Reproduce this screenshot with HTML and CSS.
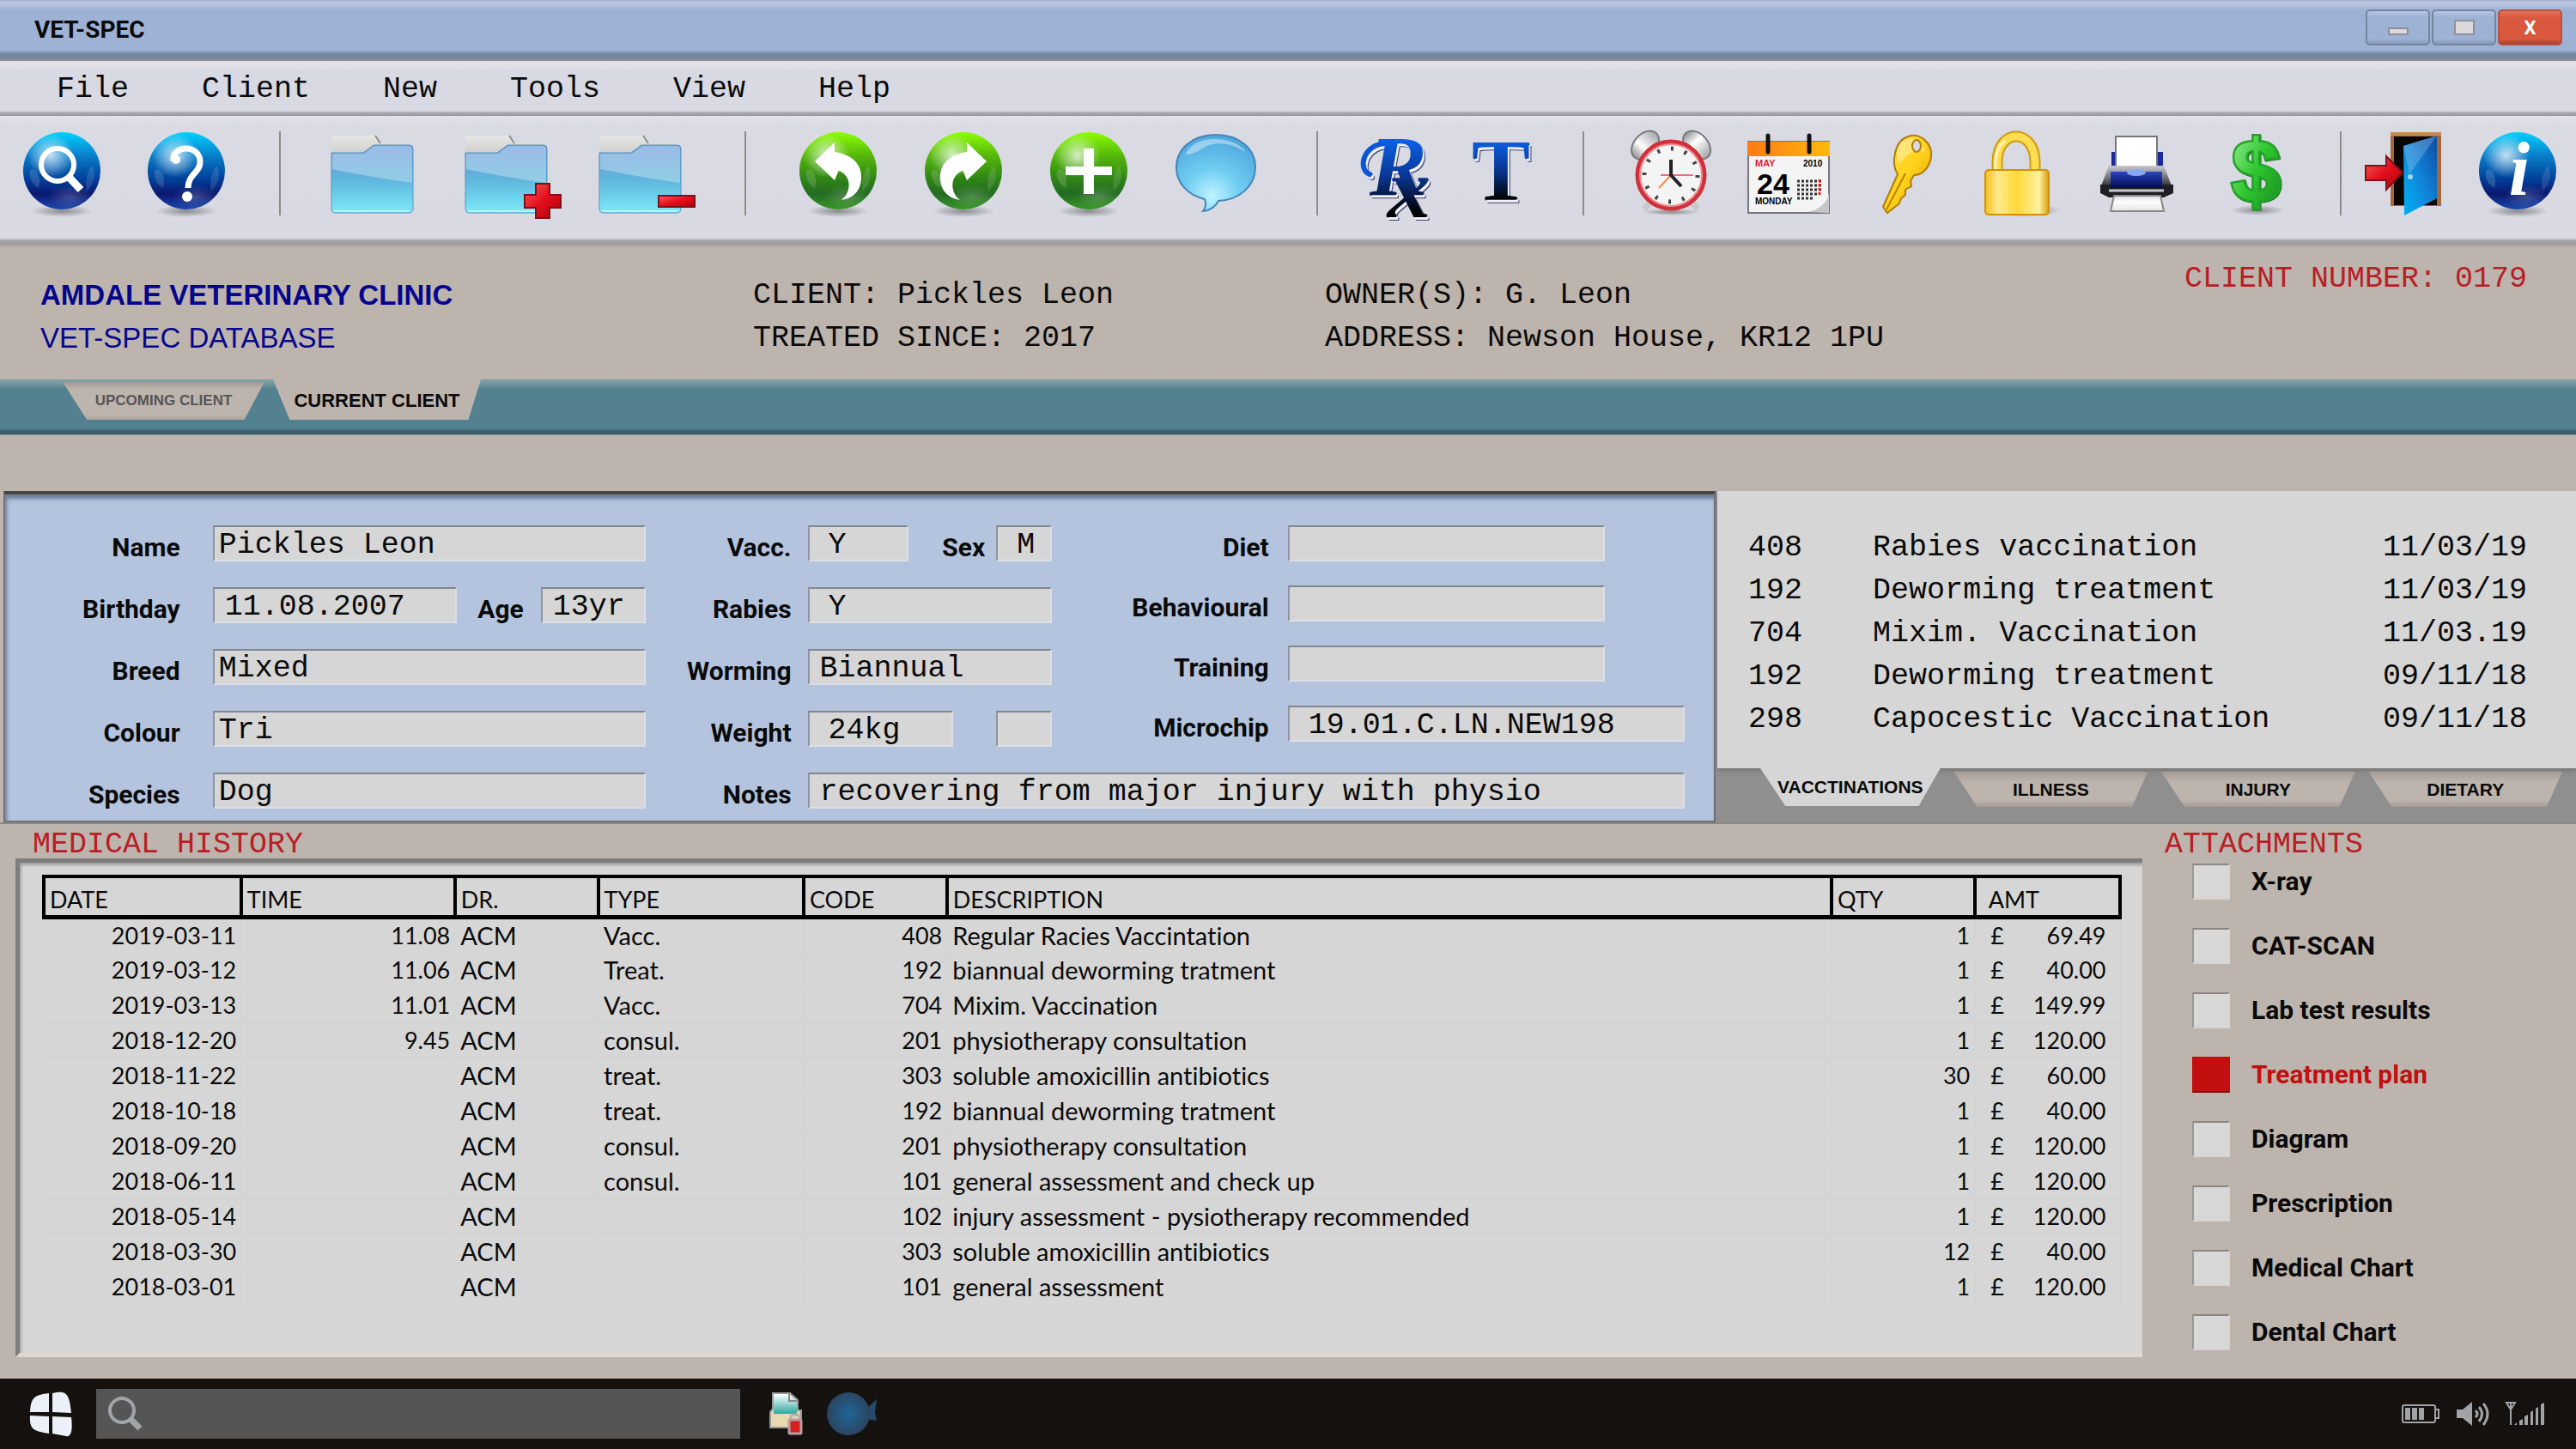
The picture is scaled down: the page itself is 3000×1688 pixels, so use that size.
FILE: index.html
```html
<!DOCTYPE html>
<html lang="en">
<head>
    <meta charset="UTF-8">
    <meta name="viewport" content="width=device-width, initial-scale=1.0">
    <title>VET-SPEC</title>
    <link rel="stylesheet" href="styles.css">
</head>
<body>
    <!-- Shared gradients and shapes for the icons -->
    <svg class="icon-defs" aria-hidden="true">
        <defs>
            <linearGradient id="blueOrb" x1="0" y1="0" x2="0" y2="1">
                <stop offset="0" stop-color="#00d2ff"/>
                <stop offset="0.3" stop-color="#0a7fca"/>
                <stop offset="0.6" stop-color="#00419b"/>
                <stop offset="0.8" stop-color="#0b1770"/>
                <stop offset="1" stop-color="#1c4bb0"/>
            </linearGradient>
            <linearGradient id="greenOrb" x1="0" y1="0" x2="0" y2="1">
                <stop offset="0" stop-color="#8cff00"/>
                <stop offset="0.3" stop-color="#56b80c"/>
                <stop offset="0.6" stop-color="#2f8516"/>
                <stop offset="0.8" stop-color="#246b22"/>
                <stop offset="1" stop-color="#3a9a2a"/>
            </linearGradient>
            <radialGradient id="shine">
                <stop offset="0" stop-color="#fff" stop-opacity="0.75"/>
                <stop offset="1" stop-color="#fff" stop-opacity="0"/>
            </radialGradient>
            <radialGradient id="shade">
                <stop offset="0" stop-color="#555" stop-opacity="0.6"/>
                <stop offset="1" stop-color="#555" stop-opacity="0"/>
            </radialGradient>
            <linearGradient id="folderFront" x1="0" y1="0" x2="0" y2="1">
                <stop offset="0" stop-color="#6a9bd8"/>
                <stop offset="0.5" stop-color="#5fb4dc"/>
                <stop offset="1" stop-color="#7deaf8"/>
            </linearGradient>
            <linearGradient id="folderBack" x1="0" y1="0" x2="0" y2="1">
                <stop offset="0" stop-color="#e6e6e4"/>
                <stop offset="1" stop-color="#bfbfbd"/>
            </linearGradient>
            <linearGradient id="redGloss" x1="0" y1="0" x2="1" y2="1">
                <stop offset="0" stop-color="#ff5a5a"/>
                <stop offset="0.5" stop-color="#e0101c"/>
                <stop offset="1" stop-color="#b30009"/>
            </linearGradient>
            <radialGradient id="bubbleFill" cx="0.45" cy="0.8" r="0.8">
                <stop offset="0" stop-color="#bff4ff"/>
                <stop offset="0.45" stop-color="#6fcdf2"/>
                <stop offset="1" stop-color="#4ea6dc"/>
            </radialGradient>
            <linearGradient id="inkBlue" x1="0" y1="0" x2="0" y2="1">
                <stop offset="0.1" stop-color="#0a6cff"/>
                <stop offset="0.5" stop-color="#0a3590"/>
                <stop offset="0.8" stop-color="#000"/>
            </linearGradient>
            <linearGradient id="gold" x1="0" y1="0" x2="1" y2="1">
                <stop offset="0" stop-color="#ffe14a"/>
                <stop offset="0.5" stop-color="#ffd21c"/>
                <stop offset="1" stop-color="#d99a00"/>
            </linearGradient>
            <linearGradient id="lockBody" x1="0" y1="0" x2="1" y2="0">
                <stop offset="0" stop-color="#f4be1c"/>
                <stop offset="0.2" stop-color="#ffe98c"/>
                <stop offset="0.5" stop-color="#ffd93a"/>
                <stop offset="0.85" stop-color="#fff0a0"/>
                <stop offset="1" stop-color="#dc9c08"/>
            </linearGradient>
            <linearGradient id="orange" x1="0" y1="0" x2="1" y2="0">
                <stop offset="0" stop-color="#ff7a14"/>
                <stop offset="1" stop-color="#ffb90a"/>
            </linearGradient>
            <linearGradient id="bell" x1="0" y1="0" x2="1" y2="0">
                <stop offset="0" stop-color="#8f9093"/>
                <stop offset="0.4" stop-color="#fff"/>
                <stop offset="1" stop-color="#a4a5a9"/>
            </linearGradient>
            <linearGradient id="paper" x1="0" y1="0" x2="0" y2="1">
                <stop offset="0" stop-color="#dcdcdc"/>
                <stop offset="0.4" stop-color="#fff"/>
                <stop offset="1" stop-color="#e4e4e4"/>
            </linearGradient>
            <linearGradient id="printerSide" x1="0" y1="0" x2="0" y2="1">
                <stop offset="0" stop-color="#c9c9cf"/>
                <stop offset="0.6" stop-color="#67676f"/>
                <stop offset="1" stop-color="#1c1c20"/>
            </linearGradient>
            <linearGradient id="printerFront" x1="0" y1="0" x2="0" y2="1">
                <stop offset="0" stop-color="#2b45c0"/>
                <stop offset="1" stop-color="#020a50"/>
            </linearGradient>
            <linearGradient id="money" x1="0" y1="0" x2="1" y2="1">
                <stop offset="0" stop-color="#a4f0a0"/>
                <stop offset="0.5" stop-color="#2fc62f"/>
                <stop offset="1" stop-color="#158a1c"/>
            </linearGradient>
            <linearGradient id="doorBlue" x1="0" y1="1" x2="1" y2="0">
                <stop offset="0" stop-color="#00b4f4"/>
                <stop offset="0.5" stop-color="#1183d8"/>
                <stop offset="1" stop-color="#0d4aa0"/>
            </linearGradient>
            <linearGradient id="sheetTeal" x1="0" y1="0" x2="0" y2="1">
                <stop offset="0" stop-color="#fff"/>
                <stop offset="1" stop-color="#2fa8a0"/>
            </linearGradient>
            <radialGradient id="fishBlue">
                <stop offset="0" stop-color="#1f6699"/>
                <stop offset="1" stop-color="#2a4560"/>
            </radialGradient>
            <g id="orbShine">
                <ellipse cx="45" cy="93" rx="36" ry="7" fill="url(#shade)"/>
            </g>
            <g id="orbLight">
                <ellipse cx="32" cy="28" rx="27" ry="26" fill="url(#shine)"/>
                <path d="M8 46 C14 40 22 52 18 66 C10 62 7 54 8 46 Z" fill="#fff" opacity="0.15"/>
                <path d="M80 40 C86 50 82 62 74 70 C72 58 74 48 80 40 Z" fill="#fff" opacity="0.12"/>
                <ellipse cx="55" cy="76" rx="26" ry="14" fill="url(#shine)" opacity="0.25"/>
            </g>
            <g id="folder">
                <path d="M1 5 H52 L58 13 H92 V40 H1 Z" fill="url(#folderBack)"/>
                <path d="M52 5 L58 14" stroke="#8d8d8d" stroke-width="2" fill="none"/>
                <path d="M1 25 H38 L50 16 H92 Q96 16 96 20 V90 Q96 95 91 95 H6 Q1 95 1 90 Z" fill="url(#folderFront)" stroke="#5c93bd" stroke-width="1"/>
                <path d="M2 26 H39 L51 17 H91 Q95 17 95 21 V60 Q50 54 2 44 Z" fill="#fff" opacity="0.32"/>
                <path d="M4 93 H92" stroke="#b5f6ff" stroke-width="2"/>
            </g>
        </defs>
    </svg>

    <header class="title-bar">
        <h1>VET-SPEC</h1>
        <div class="window-buttons">
            <button type="button" aria-label="Minimize">
                <svg viewBox="0 0 24 24"><rect x="1" y="13" width="22" height="7" fill="#ddd8dc" stroke="#8d8f9b" stroke-width="2"/></svg>
            </button>
            <button type="button" aria-label="Maximize">
                <svg viewBox="0 0 24 24"><rect x="1" y="4" width="22" height="16" fill="#ddd8dc" stroke="#8d8f9b" stroke-width="2"/></svg>
            </button>
            <button type="button" class="close">X</button>
        </div>
    </header>

    <nav class="menu-bar">
        <button type="button">File</button>
        <button type="button">Client</button>
        <button type="button">New</button>
        <button type="button">Tools</button>
        <button type="button">View</button>
        <button type="button">Help</button>
    </nav>

    <div class="toolbar">
        <div class="tool-group find-tools">
            <button type="button" aria-label="Search">
                <svg viewBox="0 0 90 98">
                    <use href="#orbShine"/>
                    <circle cx="45" cy="46" r="45" fill="url(#blueOrb)"/>
                    <use href="#orbLight"/>
                    <circle cx="40" cy="39" r="19" fill="none" stroke="#fff" stroke-width="6"/>
                    <path d="M53 53 L67 68" stroke="#fff" stroke-width="9"/>
                </svg>
            </button>
            <button type="button" aria-label="Help">
                <svg viewBox="0 0 90 98">
                    <use href="#orbShine"/>
                    <circle cx="45" cy="46" r="45" fill="url(#blueOrb)"/>
                    <use href="#orbLight"/>
                    <path d="M30 34 C28 16 61 14 61 36 C61 48 47 50 47 66" fill="none" stroke="#fff" stroke-width="7"/>
                    <circle cx="33" cy="33" r="5" fill="#fff"/>
                    <circle cx="46" cy="76" r="6" fill="#fff"/>
                </svg>
            </button>
        </div>
        <div class="tool-group folder-tools">
            <button type="button" aria-label="Open folder">
                <svg viewBox="0 0 113 98"><use href="#folder"/></svg>
            </button>
            <button type="button" aria-label="Add folder">
                <svg viewBox="0 0 113 98">
                    <use href="#folder"/>
                    <path d="M83 61 H99 V74 H112 V89 H99 V101 H83 V89 H70 V74 H83 Z" fill="url(#redGloss)" stroke="#7d1014" stroke-width="2"/>
                </svg>
            </button>
            <button type="button" aria-label="Remove folder">
                <svg viewBox="0 0 113 98">
                    <use href="#folder"/>
                    <rect x="70" y="75" width="42" height="13" fill="url(#redGloss)" stroke="#7d1014" stroke-width="2"/>
                </svg>
            </button>
        </div>
        <div class="tool-group edit-tools">
            <button type="button" aria-label="Undo">
                <svg viewBox="0 0 90 98">
                    <use href="#orbShine"/>
                    <circle cx="45" cy="46" r="45" fill="url(#greenOrb)"/>
                    <use href="#orbLight"/>
                    <path d="M18 35 L41 13 V24 C66 28 73 42 72 56 C71 70 62 78 49 80 C60 72 62 52 46 46 V45 L41 57 Z" fill="#fff"/>
                </svg>
            </button>
            <button type="button" aria-label="Redo">
                <svg viewBox="0 0 90 98">
                    <use href="#orbShine"/>
                    <circle cx="45" cy="46" r="45" fill="url(#greenOrb)"/>
                    <use href="#orbLight"/>
                    <path d="M72 35 L49 13 V24 C24 28 17 42 18 56 C19 70 28 78 41 80 C30 72 28 52 44 46 V45 L49 57 Z" fill="#fff"/>
                </svg>
            </button>
            <button type="button" aria-label="Add">
                <svg viewBox="0 0 90 98">
                    <use href="#orbShine"/>
                    <circle cx="45" cy="46" r="45" fill="url(#greenOrb)"/>
                    <use href="#orbLight"/>
                    <path d="M39 20 H51 V41 H72 V51 H51 V73 H39 V51 H18 V41 H39 Z" fill="#fff"/>
                </svg>
            </button>
            <button type="button" aria-label="Comment">
                <svg viewBox="0 0 94 98">
                    <path d="M47 4 C74 4 93 20 93 42 C93 64 74 80 50 81 C47 87 41 92 32 93 C35 89 36 84 34 79 C14 74 1 60 1 42 C1 20 20 4 47 4 Z" fill="url(#bubbleFill)" stroke="#4586b8" stroke-width="2"/>
                    <path d="M11 27 C18 14 30 9 45 9 C62 9 76 15 82 25 C64 11 42 12 31 20 C25 24 19 27 11 27 Z" fill="#fff" opacity="0.4"/>
                </svg>
            </button>
        </div>
        <div class="tool-group text-tools">
            <button type="button" aria-label="Prescription">
                <svg viewBox="0 0 81 98" class="script-type">
                    <path d="M28 14 C2 16 -4 44 10 50" fill="none" stroke="#0b56d8" stroke-width="6" stroke-linecap="round"/>
                    <text x="10" y="74">R<tspan dx="-46" dy="26">x</tspan></text>
                </svg>
            </button>
            <button type="button" aria-label="Text">
                <svg viewBox="0 0 64 98" class="block-type">
                    <text x="-3" y="80">T</text>
                </svg>
            </button>
        </div>
        <div class="tool-group desk-tools">
            <button type="button" aria-label="Reminders">
                <svg viewBox="0 0 96 98">
                    <ellipse cx="48" cy="94" rx="34" ry="4" fill="url(#shade)"/>
                    <path d="M24 82 L17 91 M72 82 L79 91" stroke="#c9c9cc" stroke-width="7"/>
                    <ellipse cx="18" cy="16" rx="19" ry="13" transform="rotate(-48 18 16)" fill="url(#bell)" stroke="#77787c" stroke-width="2"/>
                    <ellipse cx="78" cy="16" rx="19" ry="13" transform="rotate(48 78 16)" fill="url(#bell)" stroke="#77787c" stroke-width="2"/>
                    <circle cx="48" cy="51" r="39" fill="#f4f4f5" stroke="#d0303a" stroke-width="5"/>
                    <circle cx="48" cy="51" r="36" fill="none" stroke="#f08a90" stroke-width="2"/>
                    <circle cx="48" cy="51" r="31" fill="none" stroke="#444" stroke-width="5" stroke-dasharray="3 13.2"/>
                    <path d="M48 51 L34 66" stroke="#ef8a4c" stroke-width="2"/>
                    <path d="M36 51 H74" stroke="#e0727a" stroke-width="2"/>
                    <path d="M48 33 V51 L60 64" fill="none" stroke="#222" stroke-width="4"/>
                </svg>
            </button>
            <button type="button" aria-label="Calendar">
                <svg viewBox="0 0 96 98" class="calendar-type">
                    <path d="M1 12 H95 V95 H1 Z" fill="#f4f4f4" stroke="#777" stroke-width="2"/>
                    <rect x="0" y="12" width="96" height="17" fill="url(#orange)"/>
                    <path d="M70 94 C82 92 93 84 95 72 V95 Z" fill="#c7c7c7"/>
                    <path d="M24 5 V24 M72 5 V24" stroke="#111" stroke-width="5" stroke-linecap="round"/>
                    <text x="9" y="41" class="month">MAY</text>
                    <text x="65" y="41" class="year">2010</text>
                    <text x="11" y="73" class="day">24</text>
                    <text x="9" y="85" class="weekday">MONDAY</text>
                    <path d="M58 58 H86 M58 63 H86 M58 68 H86 M58 73 H82 M58 78 H76" stroke="#333" stroke-width="3" stroke-dasharray="3 2"/>
                    <path d="M84 56 V74" stroke="#e02424" stroke-width="3" stroke-dasharray="3 2"/>
                </svg>
            </button>
            <button type="button" aria-label="Password">
                <svg viewBox="0 0 96 98">
                    <path d="M50 6 C64 1 79 14 77 30 C75 42 67 51 57 51 L53 58 L54 64 L47 68 L47 74 L42 78 L40 84 L26 95 L21 88 L38 50 C30 38 34 11 50 6 Z" fill="url(#gold)" stroke="#b07c08" stroke-width="2"/>
                    <path d="M47 49 L25 91" stroke="#b98306" stroke-width="2"/>
                    <path d="M42 12 C52 4 68 10 70 24 C60 20 48 26 40 38 C36 30 36 20 42 12 Z" fill="#fff" opacity="0.35"/>
                    <ellipse cx="60" cy="17" rx="5" ry="7" fill="#d8d9e2" stroke="#b07c08" stroke-width="2"/>
                </svg>
            </button>
            <button type="button" aria-label="Lock record">
                <svg viewBox="0 0 96 98">
                    <ellipse cx="50" cy="92" rx="42" ry="8" fill="url(#shade)"/>
                    <path d="M17 48 V36 C17 -4 61 -4 61 36 V48" fill="none" stroke="#d09a10" stroke-width="13"/>
                    <path d="M17 48 V36 C17 -4 61 -4 61 36 V48" fill="none" stroke="#ffdd50" stroke-width="9"/>
                    <path d="M15 48 V36 C16 20 21 14 27 11" fill="none" stroke="#fff5c0" stroke-width="3"/>
                    <rect x="3" y="45" width="74" height="52" rx="4" fill="url(#lockBody)" stroke="#cf9405" stroke-width="2"/>
                </svg>
            </button>
            <button type="button" aria-label="Print">
                <svg viewBox="0 0 96 98">
                    <rect x="13" y="24" width="60" height="22" fill="#1a2a9c"/>
                    <rect x="18" y="6" width="48" height="36" fill="#fff" stroke="#777" stroke-width="2"/>
                    <path d="M10 40 H74 L84 66 H0 Z" fill="url(#printerSide)"/>
                    <path d="M0 62 H85 V72 L74 77 H10 L0 72 Z" fill="#1e1e24"/>
                    <path d="M12 47 H72 V66 H12 Z" fill="url(#printerFront)"/>
                    <path d="M10 69 H74" stroke="#c9c9cf" stroke-width="3"/>
                    <ellipse cx="42" cy="48" rx="11" ry="4" fill="#89a8f4"/>
                    <path d="M16 75 H70 L74 93 H12 Z" fill="url(#paper)" stroke="#888" stroke-width="2"/>
                </svg>
            </button>
            <button type="button" aria-label="Billing">
                <svg viewBox="0 0 96 98" class="money-type">
                    <ellipse cx="46" cy="92" rx="32" ry="6" fill="url(#shade)"/>
                    <text x="44" y="81">$</text>
                </svg>
            </button>
        </div>
        <div class="tool-group exit-tools">
            <button type="button" aria-label="Exit">
                <svg viewBox="0 0 90 98">
                    <path d="M30 1 H89 V87 H30 Z" fill="#a5683a"/>
                    <path d="M30 1 H89 V5 H30 Z" fill="#c98a52"/>
                    <path d="M34 6 H84 V86 H34 Z" fill="#0a0604"/>
                    <path d="M45 17 L84 5 V78 L46 98 Z" fill="url(#doorBlue)"/>
                    <path d="M45 17 L84 5 L52 50 Z" fill="#fff" opacity="0.2"/>
                    <circle cx="53" cy="53" r="3" fill="#9fd8e8"/>
                    <path d="M1 40 H25 V29 L44 48 L25 68 V57 H1 Z" fill="url(#redGloss)" stroke="#80101c" stroke-width="2"/>
                </svg>
            </button>
            <button type="button" aria-label="About">
                <svg viewBox="0 0 90 98" class="info-type">
                    <use href="#orbShine"/>
                    <circle cx="45" cy="46" r="45" fill="url(#blueOrb)"/>
                    <use href="#orbLight"/>
                    <text x="47" y="74">i</text>
                </svg>
            </button>
        </div>
    </div>

    <section class="client-header">
        <div class="clinic">
            <h2>AMDALE VETERINARY CLINIC</h2>
            <p>VET-SPEC DATABASE</p>
        </div>
        <div class="client-info">
            <p>CLIENT: Pickles Leon</p>
            <p>TREATED SINCE: 2017</p>
        </div>
        <div class="client-info">
            <p>OWNER(S): G. Leon</p>
            <p>ADDRESS: Newson House, KR12 1PU</p>
        </div>
        <p class="client-number">CLIENT NUMBER: 0179</p>
    </section>

    <nav class="client-tabs">
        <button type="button" class="client-tab">UPCOMING CLIENT</button>
        <button type="button" class="client-tab active">CURRENT CLIENT</button>
    </nav>

    <main>
        <div class="record-row">
            <form class="record">
                <div class="record-column pet">
                    <div class="field">
                        <label for="name">Name</label>
                        <input type="text" id="name" value="Pickles Leon">
                    </div>
                    <div class="field">
                        <label for="birthday">Birthday</label>
                        <div class="pair birthday-pair">
                            <input type="text" id="birthday" class="inset" value="11.08.2007">
                            <label for="age">Age</label>
                            <input type="text" id="age" class="inset" value="13yr">
                        </div>
                    </div>
                    <div class="field">
                        <label for="breed">Breed</label>
                        <input type="text" id="breed" value="Mixed">
                    </div>
                    <div class="field">
                        <label for="colour">Colour</label>
                        <input type="text" id="colour" value="Tri">
                    </div>
                    <div class="field">
                        <label for="species">Species</label>
                        <input type="text" id="species" value="Dog">
                    </div>
                </div>
                <div class="record-column health">
                    <div class="field">
                        <label for="vacc">Vacc.</label>
                        <div class="pair sex-pair">
                            <input type="text" id="vacc" class="indent" value="Y">
                            <label for="sex">Sex</label>
                            <input type="text" id="sex" class="indent" value="M">
                        </div>
                    </div>
                    <div class="field">
                        <label for="rabies">Rabies</label>
                        <input type="text" id="rabies" class="indent" value="Y">
                    </div>
                    <div class="field">
                        <label for="worming">Worming</label>
                        <input type="text" id="worming" class="inset" value="Biannual">
                    </div>
                    <div class="field">
                        <label for="weight">Weight</label>
                        <div class="pair weight-pair">
                            <input type="text" id="weight" class="indent" value="24kg">
                            <input type="text" aria-label="Weight flag">
                        </div>
                    </div>
                </div>
                <div class="record-column care">
                    <div class="field">
                        <label for="diet">Diet</label>
                        <input type="text" id="diet">
                    </div>
                    <div class="field">
                        <label for="behavioural">Behavioural</label>
                        <input type="text" id="behavioural">
                    </div>
                    <div class="field">
                        <label for="training">Training</label>
                        <input type="text" id="training">
                    </div>
                    <div class="field wide">
                        <label for="microchip">Microchip</label>
                        <input type="text" id="microchip" class="indent" value="19.01.C.LN.NEW198">
                    </div>
                </div>
                <div class="field notes">
                    <label for="notes">Notes</label>
                    <input type="text" id="notes" class="inset" value="recovering from major injury with physio">
                </div>
            </form>

            <section class="treatments">
                <div class="treatment-list">
                    <table>
                        <tr><td>408</td><td>Rabies vaccination</td><td>11/03/19</td></tr>
                        <tr><td>192</td><td>Deworming treatment</td><td>11/03/19</td></tr>
                        <tr><td>704</td><td>Mixim. Vaccination</td><td>11/03.19</td></tr>
                        <tr><td>192</td><td>Deworming treatment</td><td>09/11/18</td></tr>
                        <tr><td>298</td><td>Capocestic Vaccination</td><td>09/11/18</td></tr>
                    </table>
                </div>
                <nav class="treatment-tabs">
                    <button type="button" class="active">VACCTINATIONS</button>
                    <button type="button">ILLNESS</button>
                    <button type="button">INJURY</button>
                    <button type="button">DIETARY</button>
                </nav>
            </section>
        </div>

        <div class="history-row">
            <section class="history">
                <h2>MEDICAL HISTORY</h2>
                <div class="history-panel">
                    <table>
                        <colgroup>
                            <col class="col-date">
                            <col class="col-time">
                            <col class="col-dr">
                            <col class="col-type">
                            <col class="col-code">
                            <col class="col-description">
                            <col class="col-qty">
                            <col class="col-currency">
                            <col class="col-amount">
                        </colgroup>
                        <thead>
                            <tr>
                                <th>DATE</th>
                                <th>TIME</th>
                                <th>DR.</th>
                                <th>TYPE</th>
                                <th>CODE</th>
                                <th>DESCRIPTION</th>
                                <th>QTY</th>
                                <th colspan="2" class="amt">AMT</th>
                            </tr>
                        </thead>
                        <tbody>
                            <tr><td class="num">2019-03-11</td><td class="num">11.08</td><td>ACM</td><td>Vacc.</td><td class="num">408</td><td>Regular Racies Vaccintation</td><td class="num">1</td><td class="currency">£</td><td class="amount">69.49</td></tr>
                            <tr><td class="num">2019-03-12</td><td class="num">11.06</td><td>ACM</td><td>Treat.</td><td class="num">192</td><td>biannual deworming tratment</td><td class="num">1</td><td class="currency">£</td><td class="amount">40.00</td></tr>
                            <tr><td class="num">2019-03-13</td><td class="num">11.01</td><td>ACM</td><td>Vacc.</td><td class="num">704</td><td>Mixim. Vaccination</td><td class="num">1</td><td class="currency">£</td><td class="amount">149.99</td></tr>
                            <tr><td class="num">2018-12-20</td><td class="num">9.45</td><td>ACM</td><td>consul.</td><td class="num">201</td><td>physiotherapy consultation</td><td class="num">1</td><td class="currency">£</td><td class="amount">120.00</td></tr>
                            <tr><td class="num">2018-11-22</td><td></td><td>ACM</td><td>treat.</td><td class="num">303</td><td>soluble amoxicillin antibiotics</td><td class="num">30</td><td class="currency">£</td><td class="amount">60.00</td></tr>
                            <tr><td class="num">2018-10-18</td><td></td><td>ACM</td><td>treat.</td><td class="num">192</td><td>biannual deworming tratment</td><td class="num">1</td><td class="currency">£</td><td class="amount">40.00</td></tr>
                            <tr><td class="num">2018-09-20</td><td></td><td>ACM</td><td>consul.</td><td class="num">201</td><td>physiotherapy consultation</td><td class="num">1</td><td class="currency">£</td><td class="amount">120.00</td></tr>
                            <tr><td class="num">2018-06-11</td><td></td><td>ACM</td><td>consul.</td><td class="num">101</td><td>general assessment and check up</td><td class="num">1</td><td class="currency">£</td><td class="amount">120.00</td></tr>
                            <tr><td class="num">2018-05-14</td><td></td><td>ACM</td><td></td><td class="num">102</td><td>injury assessment - pysiotherapy recommended</td><td class="num">1</td><td class="currency">£</td><td class="amount">120.00</td></tr>
                            <tr><td class="num">2018-03-30</td><td></td><td>ACM</td><td></td><td class="num">303</td><td>soluble amoxicillin antibiotics</td><td class="num">12</td><td class="currency">£</td><td class="amount">40.00</td></tr>
                            <tr><td class="num">2018-03-01</td><td></td><td>ACM</td><td></td><td class="num">101</td><td>general assessment</td><td class="num">1</td><td class="currency">£</td><td class="amount">120.00</td></tr>
                        </tbody>
                    </table>
                </div>
            </section>

            <section class="attachments">
                <h2>ATTACHMENTS</h2>
                <div class="attachment-list">
                    <label><input type="checkbox">X-ray</label>
                    <label><input type="checkbox">CAT-SCAN</label>
                    <label><input type="checkbox">Lab test results</label>
                    <label><input type="checkbox" checked>Treatment plan</label>
                    <label><input type="checkbox">Diagram</label>
                    <label><input type="checkbox">Prescription</label>
                    <label><input type="checkbox">Medical Chart</label>
                    <label><input type="checkbox">Dental Chart</label>
                </div>
            </section>
        </div>
    </main>

    <footer class="taskbar">
        <button type="button" class="start" aria-label="Start">
            <svg viewBox="0 0 52 52">
                <path d="M2 24 C3 8 6 4 24 2 V24 Z M28 2 C44 -2 48 2 50 25 L28 24 Z M2 28 L24 29 V49 C6 46 1 44 2 28 Z M28 29 L50 30 C52 44 50 54 44 52 L28 49 Z" fill="#ecf0f8"/>
            </svg>
        </button>
        <div class="search">
            <svg viewBox="0 0 40 40" aria-hidden="true">
                <circle cx="16" cy="16" r="14" fill="none" stroke="#a2a4a8" stroke-width="4"/>
                <path d="M25 25 L37 37" stroke="#a2a4a8" stroke-width="7"/>
            </svg>
            <input type="text" aria-label="Search">
        </div>
        <button type="button" class="task" aria-label="Locked documents">
            <svg viewBox="0 0 40 52">
                <path d="M5 2 H25 L34 10 V22 H38 V42 H2 V24 L5 20 Z" fill="#e8d9b0" stroke="#999" stroke-width="2"/>
                <path d="M6 3 H24 L33 11 V26 H6 Z" fill="url(#sheetTeal)"/>
                <path d="M24 3 V11 H33" fill="none" stroke="#888" stroke-width="2"/>
                <path d="M26 34 V30 C26 26 36 26 36 30 V34" fill="none" stroke="#b8b0b0" stroke-width="3"/>
                <rect x="24" y="33" width="14" height="16" rx="1" fill="#d42020" stroke="#b8a0a0" stroke-width="3"/>
            </svg>
        </button>
        <button type="button" class="task fish" aria-label="Fish">
            <svg viewBox="0 0 58 52">
                <path d="M44 22 L58 9 L56 24 L58 34 L44 32 Z" fill="#24496a"/>
                <circle cx="25" cy="26" r="25" fill="url(#fishBlue)"/>
            </svg>
        </button>
        <div class="tray">
            <svg viewBox="0 0 44 28" class="battery" role="img" aria-label="Battery">
                <rect x="1" y="4" width="38" height="20" rx="2" fill="none" stroke="#a2a3a6" stroke-width="2"/>
                <path d="M39 9 H43 V19 H39" fill="none" stroke="#a2a3a6" stroke-width="2"/>
                <path d="M4 7 H10 V21 H4 Z M12 7 H18 V21 H12 Z M20 7 H26 V21 H20 Z" fill="#a2a3a6"/>
            </svg>
            <svg viewBox="0 0 38 28" class="speaker" role="img" aria-label="Volume">
                <path d="M0 9 H7 L18 0 V28 L7 19 H0 Z" fill="#a2a3a6"/>
                <path d="M22 10 Q26 14 22 18 M26 6 Q33 14 26 23 M31 2 Q41 14 31 27" fill="none" stroke="#a2a3a6" stroke-width="3"/>
            </svg>
            <svg viewBox="0 0 44 28" class="signal" role="img" aria-label="Signal">
                <path d="M0 1 H10 L5 9 Z M5 1 V27" fill="none" stroke="#a2a3a6" stroke-width="2"/>
                <path d="M9 27 L12 24 V27 Z M15 22 L19 20 V27 H15 Z M21 17 L25 15 V27 H21 Z M28 12 L31 10 V27 H28 Z M34 8 L37 6 V27 H34 Z M40 3 L44 1 V27 H40 Z" fill="#a2a3a6"/>
            </svg>
        </div>
    </footer>
</body>
</html>
```
FILE: styles.css
```css
* {
    box-sizing: border-box;
}
body {
    display: flex;
    flex-direction: column;
    min-height: 100vh;
    margin: 0;
    background-color: #bdb4ad;
    color: #0a0a0a;
    font-family: "Liberation Sans", Arial, sans-serif;
}
h1, h2, p {
    margin: 0;
}
button {
    padding: 0;
    border: none;
    background: none;
    color: inherit;
    font: inherit;
    cursor: pointer;
}
svg {
    display: block;
    overflow: visible;
}
.icon-defs {
    position: absolute;
    width: 0;
    height: 0;
}

/* Title bar */
.title-bar {
    display: flex;
    justify-content: space-between;
    align-items: flex-start;
    padding: 11px 16px 12px 40px;
    background: linear-gradient(#9aa8c4 0, #bac6df 2px, #b4c1de 6px, #9eb2d6 12px, #9eb2d6 58px, #70859d 63px, #74879c 68px, #8b8d98 69px);
}
.title-bar h1 {
    font-family: Roboto, sans-serif;
    font-size: 28px;
    font-weight: 700;
    line-height: 48px;
}
.window-buttons {
    display: flex;
    gap: 2px;
}
.window-buttons button {
    display: flex;
    align-items: center;
    justify-content: center;
    width: 75px;
    height: 42px;
    border: 2px solid #73869f;
    border-radius: 5px;
    background: linear-gradient(#b5c4e2, #9eb2d6 20%, #9eb2d6 85%, #8799b9);
}
.window-buttons svg {
    width: 24px;
    height: 24px;
}
.window-buttons .close {
    border-color: #b85240;
    background: linear-gradient(#e2735a, #d9583e 20%, #d9583e 85%, #a8412f);
    color: #fff;
    font-family: Roboto, sans-serif;
    font-size: 22px;
    font-weight: 700;
}

/* Menu bar */
.menu-bar {
    display: flex;
    gap: 85px;
    padding: 10px 66px 8px;
    background: linear-gradient(#e6e0e5 0, #e2dee6 6px, #d8d9e2 12px, #d8d9e2 58px, #b1aeb9 60px, #94919e 64px);
    font-family: "Liberation Mono", monospace;
    font-size: 35px;
    line-height: 46px;
}

/* Toolbar */
.toolbar {
    display: grid;
    grid-template-columns: 325fr 542fr 666fr 310fr 882fr 275fr;
    padding: 18px 0 37px;
    background: linear-gradient(#e3e0ea 0, #dadae3 12px, #d8d9e2 142px, #a3a0a6 146px, #a09da2 150px, #bdb4ad 153px);
}
.tool-group {
    display: flex;
    height: 98px;
    border-left: 2px solid #908a8a;
}
.tool-group svg {
    height: 98px;
}
.find-tools {
    gap: 55px;
    padding-left: 25px;
    border-color: transparent;
}
.folder-tools {
    gap: 43px;
    padding-left: 58px;
}
.edit-tools {
    gap: 56px;
    padding-left: 62px;
}
.text-tools {
    gap: 51px;
    padding-left: 50px;
}
.desk-tools {
    gap: 41px;
    padding-left: 53px;
}
.exit-tools {
    gap: 43px;
    padding-left: 27px;
}
.script-type,
.block-type {
    font-family: "Liberation Serif", serif;
    font-size: 100px;
    font-weight: 700;
    fill: url(#inkBlue);
    filter: drop-shadow(2px 3px 0 #f0f0fa) drop-shadow(1px 1px 0 #3a4068);
}
.script-type {
    font-style: italic;
}
.block-type {
    font-size: 102px;
}
.calendar-type {
    font-family: "Liberation Sans", Arial, sans-serif;
    font-weight: 700;
}
.month {
    font-size: 11px;
    fill: #e0202c;
}
.year {
    font-size: 10px;
}
.day {
    font-size: 34px;
}
.weekday {
    font-size: 10px;
}
.money-type {
    font-family: "Liberation Sans", Arial, sans-serif;
    font-size: 102px;
    font-weight: 700;
    text-anchor: middle;
}
.money-type text {
    fill: url(#money);
    stroke: #23a328;
    stroke-width: 5px;
    paint-order: stroke;
    filter: drop-shadow(1px 1px 0 #157a1e);
}
.info-type {
    font-family: "Liberation Serif", serif;
    font-size: 88px;
    font-style: italic;
    font-weight: 700;
    text-anchor: middle;
}
.info-type text {
    fill: #fff;
}

/* Client header */
.client-header {
    display: grid;
    grid-template-columns: 830fr 666fr 900fr 500fr;
    padding: 12px 57px 23px 47px;
    font-family: "Liberation Mono", monospace;
    font-size: 35px;
    line-height: 50px;
    white-space: nowrap;
}
.clinic,
.client-info {
    padding-top: 19px;
}
.clinic {
    color: #06068c;
    font-family: "Liberation Sans", Arial, sans-serif;
    font-size: 33px;
}
.clinic h2 {
    font-size: 33px;
}
.client-number {
    color: #b81e26;
    text-align: right;
}

/* Client tabs */
.client-tabs {
    display: flex;
    align-items: flex-start;
    gap: 10px;
    padding: 0 73px 19px;
    background: linear-gradient(#83a0a7 0, #7399a2 5px, #53818f 11px, #53818f 57px, #3d5a67 61px, #3d5a67 64px, #b7bdc0 65px);
}
.client-tab {
    width: 235px;
    height: 44px;
    margin-top: 3px;
    background: linear-gradient(#a39991, #bdb4ad 20%, #bdb4ad 85%, #b0a59d);
    clip-path: polygon(0 0, 100% 0, 90% 100%, 12% 100%);
    color: #555;
    font-size: 17px;
    font-weight: 700;
    line-height: 44px;
}
.client-tab.active {
    width: 242px;
    height: 47px;
    margin-top: 0;
    background: #bdb4ad;
    clip-path: polygon(0 0, 100% 0, 94% 100%, 8% 100%);
    color: #0a0a0a;
    font-size: 22px;
    line-height: 49px;
}

/* Record form */
main {
    display: flex;
    flex: 1;
    flex-direction: column;
    padding-top: 64px;
}
.record-row {
    display: grid;
    grid-template-columns: 1998fr 1002fr;
    border-bottom: 2px solid #8c8684;
}
.record {
    display: grid;
    grid-template-columns: 743fr 474fr 738fr;
    align-items: start;
    row-gap: 30px;
    margin-left: 4px;
    padding: 36px 34px 14px 4px;
    border: 2px solid #6f6f74;
    border-top: 4px solid #4d4643;
    background-color: #b4c4de;
    box-shadow: inset 2px 5px 4px #6c7c98;
}
.record-column {
    display: grid;
    row-gap: 30px;
}
.pet {
    grid-row: span 2;
}
.care {
    row-gap: 28px;
}
.field {
    display: grid;
}
.pet .field {
    grid-template-columns: 200fr 505fr;
    column-gap: 38px;
}
.health .field {
    grid-template-columns: 170fr 285fr;
    column-gap: 19px;
}
.care .field {
    grid-template-columns: 253fr 370fr 71fr;
    column-gap: 22px;
}
.care .wide {
    grid-template-columns: 253fr 463fr;
}
.notes {
    grid-column: 2 / 4;
    grid-template-columns: 170fr 1023fr;
    column-gap: 19px;
}
.record label {
    padding-top: 10px;
    font-family: Roboto, sans-serif;
    font-size: 30px;
    font-weight: 700;
    line-height: 32px;
    text-align: right;
}
.record input {
    width: 100%;
    min-width: 0;
    height: 42px;
    padding: 4px 0 0 5px;
    border: 2px solid #dcdfe4;
    border-top-color: #7f8791;
    border-left-color: #8f959e;
    border-radius: 0;
    background-color: #d6d6d6;
    color: #0a0a0a;
    font-family: "Liberation Mono", monospace;
    font-size: 35px;
    line-height: 36px;
}
.record .inset {
    padding-left: 12px;
}
.record .indent {
    padding-left: 22px;
}
.pair {
    display: grid;
    column-gap: 20px;
}
.birthday-pair {
    grid-template-columns: 284fr 58fr 122fr;
}
.sex-pair {
    grid-template-columns: 118fr 76fr 65fr;
    column-gap: 13px;
}
.weight-pair {
    grid-template-columns: 170fr 65fr;
    column-gap: 50px;
}

/* Treatments */
.treatments {
    display: flex;
    flex-direction: column;
    padding-left: 2px;
    background-color: #8f8f8f;
}
.treatment-list {
    flex: 1;
    padding: 41px 57px 0 36px;
    background-color: #d6d6d6;
    box-shadow: 0 3px 4px #777;
}
.treatment-list table {
    width: 100%;
    border-collapse: collapse;
    font-family: "Liberation Mono", monospace;
    font-size: 35px;
    line-height: 50px;
}
.treatment-list td {
    padding: 0;
}
.treatment-list td:first-child {
    width: 16%;
}
.treatment-list td:last-child {
    text-align: right;
}
.treatment-tabs {
    display: grid;
    grid-template-columns: 212fr 228fr 228fr 228fr;
    column-gap: 16px;
    align-items: start;
    padding: 0 16px 18px 50px;
}
.treatment-tabs button {
    position: relative;
    height: 41px;
    margin-top: 4px;
    background: linear-gradient(#a79d97, #bdb4ad 30%, #bdb4ad 80%, #a79d97);
    clip-path: polygon(0 0, 100% 0, 92% 100%, 12% 100%);
    font-size: 21px;
    font-weight: 700;
    line-height: 36px;
    white-space: nowrap;
}
.treatment-tabs .active {
    height: 44px;
    margin-top: 0;
    background: #d6d6d6;
    clip-path: polygon(0 0, 100% 0, 88% 100%, 14% 100%);
}

/* Medical history */
.history-row {
    display: grid;
    flex: 1;
    grid-template-columns: 2495fr 505fr;
    padding-bottom: 25px;
}
.history {
    display: flex;
    flex-direction: column;
    padding-left: 18px;
}
.history h2,
.attachments h2 {
    padding-top: 8px;
    color: #b81e26;
    font-family: "Liberation Mono", monospace;
    font-size: 35px;
    font-weight: 400;
    line-height: 32px;
}
.history h2 {
    padding-left: 20px;
}
.history-panel {
    flex: 1;
    padding: 14px 24px 0 26px;
    border: 5px solid #7f7d7c;
    border-right: none;
    border-bottom-color: #ddd6d1;
    background-color: #d6d6d6;
    box-shadow: inset 2px 3px 3px #a2a2a2;
}
.history-panel table {
    width: 100%;
    table-layout: fixed;
    border-collapse: collapse;
    font-family: Lato, sans-serif;
    font-size: 29px;
    font-variant-ligatures: none;
}
.col-date { width: 9.5%; }
.col-time { width: 10.3%; }
.col-dr { width: 6.9%; }
.col-type { width: 9.9%; }
.col-code { width: 6.9%; }
.col-qty { width: 6.9%; }
.col-currency { width: 2.2%; }
.col-amount { width: 4.8%; }
.history-panel th {
    padding: 6px 5px 0;
    border: 4px solid #000;
    border-bottom-width: 5px;
    font-size: 27px;
    font-weight: 400;
    line-height: 37px;
    text-align: left;
}
.history-panel .amt {
    padding-left: 14px;
}
.history-panel td {
    height: 41px;
    padding: 0 6px;
    border: 1px solid #d1d1d1;
    line-height: 38px;
    white-space: nowrap;
}
.history-panel .num,
.history-panel .currency,
.history-panel .amount {
    font-size: 27px;
}
.history-panel .num {
    padding-right: 5px;
    text-align: right;
}
.history-panel .currency {
    padding-left: 18px;
    border-right: none;
}
.history-panel .amount {
    padding: 0 16px 0 0;
    border-left: none;
    text-align: right;
}

/* Attachments */
.attachments {
    padding-left: 26px;
}
.attachment-list {
    display: flex;
    flex-direction: column;
    gap: 33px;
    padding: 6px 0 0 32px;
}
.attachment-list label {
    display: flex;
    align-items: center;
    gap: 25px;
    font-family: Roboto, sans-serif;
    font-size: 30px;
    font-weight: 700;
    line-height: 42px;
}
.attachment-list input {
    width: 44px;
    height: 42px;
    margin: 0;
    border: 2px solid #d9d4d0;
    border-top-color: #8a8684;
    border-left-color: #9b9794;
    appearance: none;
    background-color: #d8d8d8;
}
.attachment-list input:checked {
    border-color: #c20f10;
    border-bottom-color: #7c1212;
    background-color: #c20f10;
}
.attachment-list label:has(:checked) {
    color: #c20f10;
}

/* Taskbar */
.taskbar {
    display: flex;
    align-items: center;
    padding: 12px 37px 12px 33px;
    background-color: #14110e;
}
.start svg {
    width: 52px;
    height: 52px;
}
.search {
    display: flex;
    align-items: center;
    width: 25vw;
    height: 58px;
    margin: 0 33px 0 27px;
    padding-left: 14px;
    background-color: #555;
}
.search svg {
    width: 40px;
    height: 40px;
}
.search input {
    flex: 1;
    height: 100%;
    min-width: 0;
    padding: 0 12px;
    border: none;
    outline: none;
    background: none;
    color: #fff;
    font-size: 28px;
}
.task svg {
    height: 52px;
}
.fish {
    margin-left: 28px;
}
.tray {
    display: flex;
    gap: 20px;
    margin-left: auto;
}
.tray svg {
    height: 28px;
}
```
